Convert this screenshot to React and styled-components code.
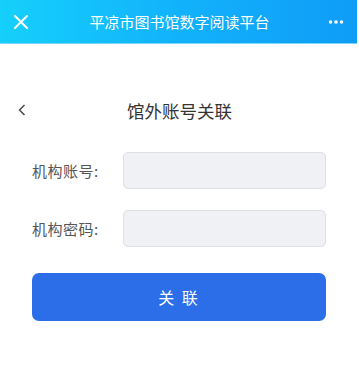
import React from 'react';
import styled, { createGlobalStyle } from 'styled-components';

const GlobalStyle = createGlobalStyle`
  body {
    margin: 0;
    background: #fff;
    font-family: "Noto Sans CJK SC", "Noto Sans", sans-serif;
  }
`;

function App() {
  return (
    <Page>
      <GlobalStyle />
      <TopBar>
        <IconButton aria-label="close">
          <svg width="16" height="16" viewBox="0 0 16 16">
            <path d="M2 2 L14 14 M14 2 L2 14" stroke="#fff" strokeWidth="2" strokeLinecap="round" />
          </svg>
        </IconButton>
        <TopTitle>平凉市图书馆数字阅读平台</TopTitle>
        <IconButton aria-label="more">
          <svg width="16" height="6" viewBox="0 0 16 6">
            <circle cx="2.5" cy="3" r="1.8" fill="#fff" />
            <circle cx="8" cy="3" r="1.8" fill="#fff" />
            <circle cx="13.5" cy="3" r="1.8" fill="#fff" />
          </svg>
        </IconButton>
      </TopBar>

      <NavRow>
        <Back aria-label="back">
          <svg width="8" height="12" viewBox="0 0 8 12">
            <path d="M6.5 1 L1.5 6 L6.5 11" fill="none" stroke="#444" strokeWidth="1.4" />
          </svg>
        </Back>
        <PageTitle>馆外账号关联</PageTitle>
      </NavRow>

      <Form>
        <Field>
          <Label>机构账号:</Label>
          <Input type="text" />
        </Field>
        <Field>
          <Label>机构密码:</Label>
          <Input type="password" />
        </Field>
        <SubmitButton>关 联</SubmitButton>
      </Form>
    </Page>
  );
}

export default App;

const Page = styled.div`
  width: 359px;
  min-height: 367px;
  background: #fff;
`;

const TopBar = styled.div`
  height: 44px;
  width: 357px;
  display: flex;
  align-items: center;
  justify-content: space-between;
  padding: 0 12px;
  box-sizing: border-box;
  background: linear-gradient(90deg, #15d0fb 0%, #12b2fb 50%, #0f9cf8 100%);
  border-bottom: 1px solid #7fd4fb;
`;

const IconButton = styled.div`
  width: 18px;
  height: 18px;
  display: flex;
  align-items: center;
  justify-content: center;
`;

const TopTitle = styled.div`
  color: #fff;
  font-size: 15px;
  margin-left: 2px;
`;

const NavRow = styled.div`
  position: relative;
  height: 40px;
  margin-top: 46px;
  display: flex;
  align-items: center;
  justify-content: center;
`;

const Back = styled.div`
  position: absolute;
  left: 18px;
  top: 14px;
  display: flex;
`;

const PageTitle = styled.h1`
  margin: 0;
  font-size: 17.5px;
  font-weight: 400;
  color: #333;
`;

const Form = styled.div`
  padding: 22px 33px 0 32px;
  display: flex;
  flex-direction: column;
  gap: 21px;
`;

const Field = styled.div`
  display: flex;
  align-items: center;
`;

const Label = styled.label`
  width: 91px;
  font-size: 15px;
  color: #555;
  letter-spacing: 0.5px;
`;

const Input = styled.input`
  flex: 1;
  height: 37px;
  box-sizing: border-box;
  background: #eff1f4;
  border: 1px solid #dcdfe4;
  border-radius: 5px;
  outline: none;
`;

const SubmitButton = styled.button`
  margin-top: 5px;
  height: 48px;
  border: none;
  border-radius: 7px;
  background: #2c6de8;
  color: #fff;
  font-family: inherit;
  font-size: 16px;
  letter-spacing: 2px;
`;
